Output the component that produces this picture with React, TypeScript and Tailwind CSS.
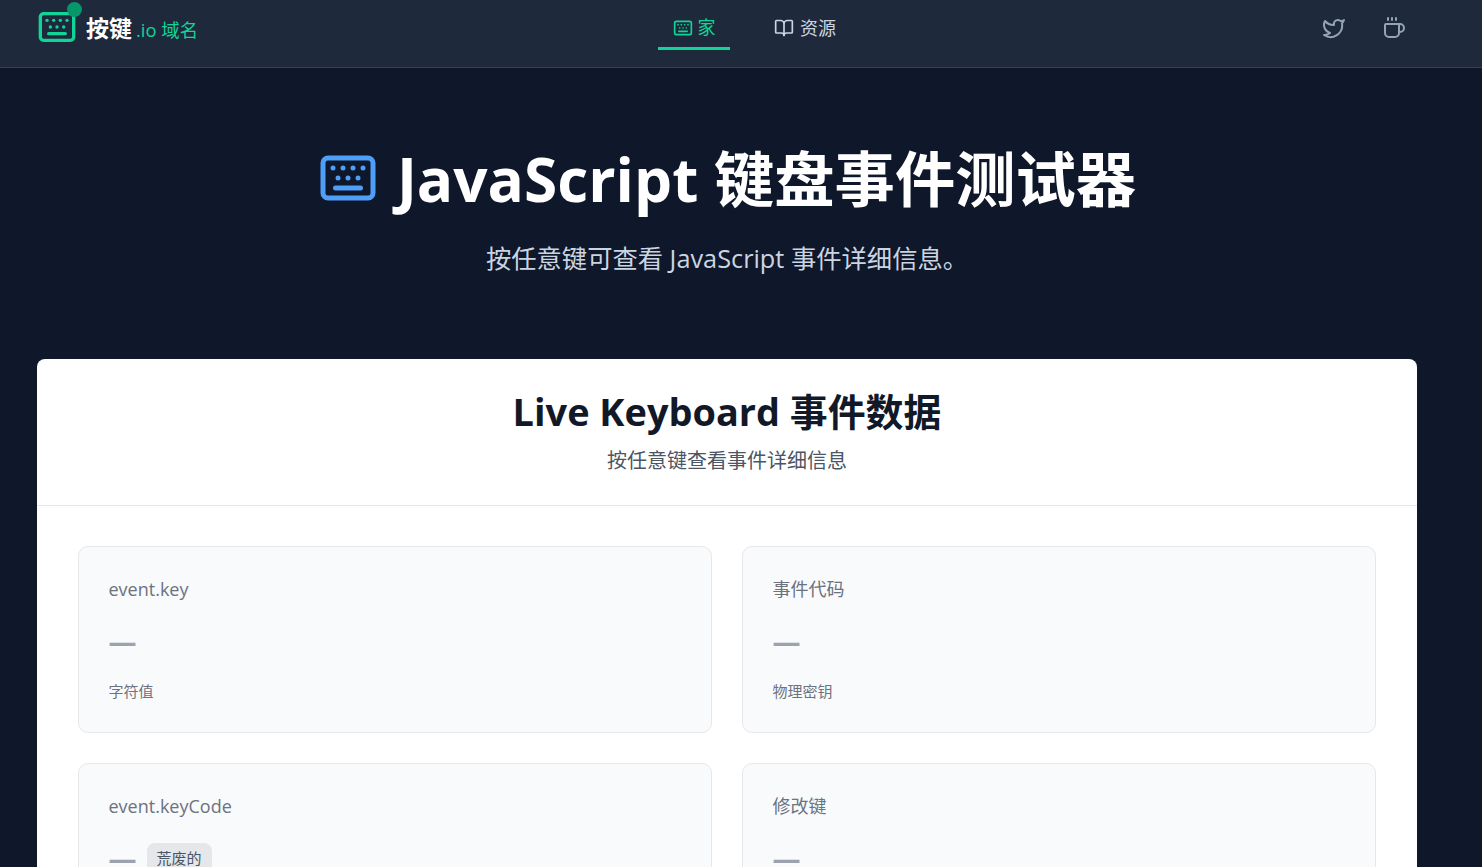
import { Keyboard, BookOpen, Twitter, Coffee } from "lucide-react";

const font = "font-['Open_Sans','Noto_Sans_CJK_SC',sans-serif]";

function Stat({ label, hint, badge }: { label: string; hint: string; badge?: string }) {
  return (
    <div className="h-[187px] rounded-[10px] border border-[#e5e7eb] bg-[#f9fafb] pl-[29.5px] pr-[30px] pt-[29px]">
      <div className="text-[18px] leading-[27px] text-[#6b7280]">{label}</div>
      <div className="mt-[20px] flex h-[36px] items-center gap-[10px]">
        <span className="text-[28px] font-bold leading-[36px] text-[#9ca3af]">—</span>
        {badge && (
          <span className="rounded-lg bg-[#e5e7eb] px-[10px] py-[5px] text-[15px] leading-[21px] text-[#4b5563]">{badge}</span>
        )}
      </div>
      <div className="mt-[22px] text-[15px] leading-[21px] text-[#6b7280]">{hint}</div>
    </div>
  );
}

export default function App() {
  return (
    <div className={`${font} h-[867px] overflow-hidden bg-[#0f172a]`}>
      <nav className="flex h-[68px] items-center border-b border-[#334155] bg-[#1e293b] pl-[37px] pr-[76px]">
        <div className="flex w-[621px] items-center pb-[13px]">
          <div className="relative">
            <Keyboard size={40} strokeWidth={2} className="text-[#10d498]" />
            <span className="absolute right-[-5px] top-[-5px] h-[15px] w-[15px] rounded-full bg-[#059669]" />
          </div>
          <div className="ml-[9px] mt-[3px] flex items-baseline gap-[4px]">
            <span className="text-[23px] font-bold leading-[32px] text-white">按键</span>
            <span className="text-[18.4px] leading-[32px] text-[#10d498]">.io 域名</span>
          </div>
        </div>
        <div className="flex items-center self-start">
          <div className="flex h-[50px] w-[72px] items-center justify-center gap-[5px] border-b-[3px] border-[#10d498] pt-[8px] text-[18px] text-[#10d498]">
            <Keyboard size={20} />
            <span>家</span>
          </div>
          <div className="ml-[44px] flex h-[50px] items-center gap-[6px] pt-[6px] text-[18px] text-[#cbd5e1]">
            <BookOpen size={20} />
            <span>资源</span>
          </div>
        </div>
        <div className="ml-auto flex items-center gap-[36px] pb-[12px] text-[#94a3b8]">
          <Twitter size={24} />
          <Coffee size={24} />
        </div>
      </nav>
      <main className="w-[1454px] px-[37px]">
        <header className="pt-[71px] text-center">
          <h1 className="flex items-center justify-center gap-[19px] text-[60.3px] font-bold leading-[80px] text-white">
            <Keyboard size={60} className="mb-[2px] text-[#4f9ef8]" />
            <span>JavaScript 键盘事件测试器</span>
          </h1>
          <p className="mt-[21px] text-[25.3px] leading-[36px] text-[#cbd5e1]">按任意键可查看 JavaScript 事件详细信息。</p>
        </header>
        <section className="mt-[83px] rounded-lg bg-white">
          <div className="h-[147px] border-b border-[#e5e7eb] pt-[25px] text-center">
            <h2 className="text-[37.9px] font-bold leading-[54px] text-[#111827]">Live Keyboard 事件数据</h2>
            <p className="mt-[8px] text-[20px] leading-[30px] text-[#4b5563]">按任意键查看事件详细信息</p>
          </div>
          <div className="grid grid-cols-2 gap-[30px] px-[41px] py-[40px] pb-[200px]">
            <Stat label="event.key" hint="字符值" />
            <Stat label="事件代码" hint="物理密钥" />
            <Stat label="event.keyCode" hint="已弃用的数值" badge="荒废的" />
            <Stat label="修改键" hint="活动修饰符" />
          </div>
        </section>
      </main>
    </div>
  );
}
